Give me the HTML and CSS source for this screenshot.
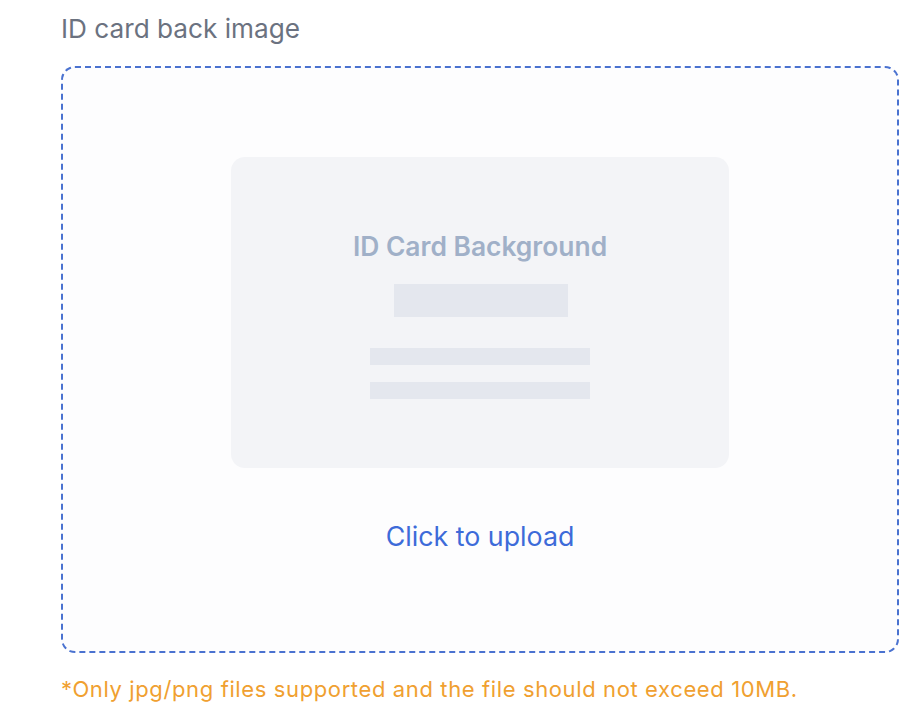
FILE: index.html
```html
<!DOCTYPE html>
<html>
<head>
<meta charset="utf-8">
<link rel="stylesheet" href="styles.css">
</head>
<body>
<div class="field">
  <div class="label">ID card back image</div>
  <div class="dropzone">
    <div class="card">
      <div class="card-title">ID Card Background</div>
      <div class="bar bar-photo"></div>
      <div class="lines">
        <div class="bar bar-line"></div>
        <div class="bar bar-line"></div>
      </div>
    </div>
    <div class="upload">Click to upload</div>
  </div>
  <div class="hint">*Only jpg/png files supported and the file should not exceed 10MB.</div>
</div>
</body>
</html>
```

FILE: styles.css
```css
html, body {
  margin: 0;
  padding: 0;
  background: #ffffff;
}
body {
  font-family: Inter, "Noto Sans", sans-serif;
}
.field {
  padding: 12px 22px 0 61px;
}
.label {
  font-size: 26.2px;
  line-height: 34px;
  color: #6b7280;
  margin-bottom: 20px;
}
.dropzone {
  width: 838px;
  height: 587px;
  box-sizing: border-box;
  border: 2px dashed #4a72d0;
  border-radius: 14px;
  background: #fdfdfe;
  display: flex;
  flex-direction: column;
  align-items: center;
  padding-top: 89px;
}
.card {
  width: 498px;
  height: 311px;
  background: #f3f4f7;
  border-radius: 14px;
  display: flex;
  flex-direction: column;
  align-items: center;
  padding-top: 72px;
  box-sizing: border-box;
}
.card-title {
  font-size: 26.4px;
  font-weight: 600;
  line-height: 34px;
  color: #a0b0c8;
}
.bar {
  background: #e4e7ee;
}
.bar-photo {
  width: 174px;
  height: 33px;
  margin-top: 21px;
  margin-left: 2px;
}
.lines {
  margin-top: 31px;
  display: flex;
  flex-direction: column;
  gap: 17px;
}
.bar-line {
  width: 220px;
  height: 17px;
}
.upload {
  margin-top: 50px;
  font-size: 26.8px;
  line-height: 36px;
  color: #3d6bd9;
}
.hint {
  margin-top: 22px;
  font-size: 22px;
  letter-spacing: 0.62px;
  line-height: 28px;
  color: #f0a030;
}
```
